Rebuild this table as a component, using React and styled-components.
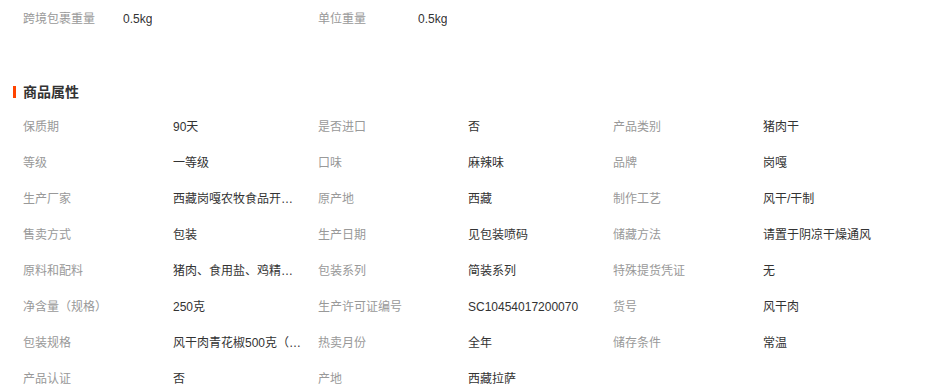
import React from "react"
import styled, { createGlobalStyle } from "styled-components"

const GlobalStyle = createGlobalStyle`
  body {
    margin: 0;
    background: #fff;
    font-family: "Liberation Sans", "Noto Sans CJK SC", sans-serif;
    font-size: 12px;
    color: #333;
  }
`

const weights = [
  ["跨境包裹重量", "0.5kg"],
  ["单位重量", "0.5kg"],
]

const attrs = [
  ["保质期", "90天"],
  ["是否进口", "否"],
  ["产品类别", "猪肉干"],
  ["等级", "一等级"],
  ["口味", "麻辣味"],
  ["品牌", "岗嘎"],
  ["生产厂家", "西藏岗嘎农牧食品开发有限公司"],
  ["原产地", "西藏"],
  ["制作工艺", "风干/干制"],
  ["售卖方式", "包装"],
  ["生产日期", "见包装喷码"],
  ["储藏方法", "请置于阴凉干燥通风"],
  ["原料和配料", "猪肉、食用盐、鸡精、辣椒、花椒"],
  ["包装系列", "简装系列"],
  ["特殊提货凭证", "无"],
  ["净含量（规格）", "250克"],
  ["生产许可证编号", "SC10454017200070"],
  ["货号", "风干肉"],
  ["包装规格", "风干肉青花椒500克（袋装）"],
  ["热卖月份", "全年"],
  ["储存条件", "常温"],
  ["产品认证", "否"],
  ["产地", "西藏拉萨"],
]

const App = () => {
  return (
    <Page>
      <GlobalStyle />
      <WeightRow>
        {weights.map(([k, v]) => (
          <WeightItem key={k}>
            <WeightLabel>{k}</WeightLabel>
            <Value>{v}</Value>
          </WeightItem>
        ))}
      </WeightRow>
      <Section>
        <Title>商品属性</Title>
        <AttrGrid>
          {attrs.map(([k, v]) => (
            <React.Fragment key={k}>
              <Label>{k}</Label>
              <Value title={v}>{v}</Value>
            </React.Fragment>
          ))}
        </AttrGrid>
      </Section>
    </Page>
  )
}

const Page = styled.div`
  width: 928px;
  height: 387px;
  overflow: hidden;
`

const WeightRow = styled.div`
  display: flex;
  height: 38px;
  align-items: center;
  padding-left: 23px;
`

const WeightItem = styled.div`
  display: flex;
  width: 295px;
`

const WeightLabel = styled.span`
  width: 100px;
  color: #999;
  line-height: 16px;
`

const Section = styled.div`
  margin-top: 44px;
`

const Title = styled.h3`
  position: relative;
  margin: 0;
  padding-left: 23px;
  height: 20px;
  line-height: 20px;
  font-size: 14px;
  font-weight: bold;
  color: #333;

  &::before {
    content: "";
    position: absolute;
    left: 13px;
    top: 4px;
    width: 3px;
    height: 12px;
    background: #ff4400;
  }
`

const AttrGrid = styled.div`
  display: grid;
  grid-template-columns: repeat(3, 150px 145px);
  grid-auto-rows: 36px;
  align-items: center;
  margin-top: 7px;
  padding-left: 23px;
`

const Label = styled.span`
  color: #999;
  line-height: 16px;
  white-space: nowrap;
`

const Value = styled.span`
  display: block;
  color: #333;
  line-height: 16px;
  max-width: 131px;
  white-space: nowrap;
  overflow: hidden;
  text-overflow: ellipsis;
`

export default App
